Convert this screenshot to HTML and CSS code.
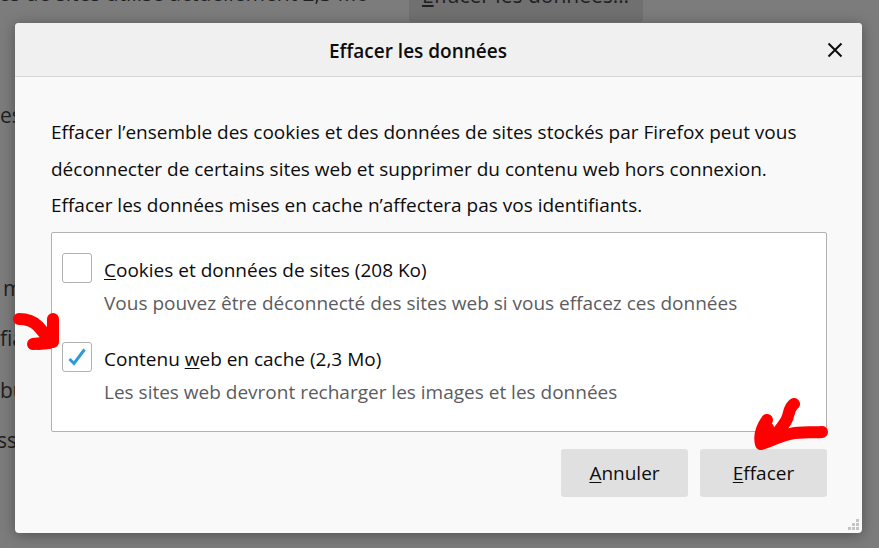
FILE: index.html
```html
<!DOCTYPE html>
<html lang="fr">
<head>
    <meta charset="UTF-8">
    <meta name="viewport" content="width=device-width, initial-scale=1.0">
    <title>Effacer les données</title>
    <link rel="stylesheet" href="styles.css">
</head>
<body>
    <div class="page">
        <div class="top-row">
            <div class="usage"><span>es de sites utilise actuellement 2,3 Mo</span></div>
            <div class="page-btn"><u>E</u>ffacer les données…</div>
        </div>
        <div class="frag frag-1"><span>es</span></div>
        <div class="frag frag-2"><span>m</span></div>
        <div class="frag frag-3"><span>fia</span></div>
        <div class="frag frag-4"><span>bu</span></div>
        <div class="frag frag-5"><span>ss</span></div>
    </div>

    <div class="dialog">
        <div class="dialog-header">
            <h1>Effacer les données</h1>
            <svg class="close" width="16" height="16" viewBox="0 0 16 16">
                <path d="M1.5 1.5 L14.5 14.5 M14.5 1.5 L1.5 14.5" stroke="#0c0c0d" stroke-width="2" fill="none"/>
            </svg>
        </div>
        <div class="dialog-body">
            <p class="intro">Effacer l’ensemble des cookies et des données de sites stockés par Firefox peut vous déconnecter de certains sites web et supprimer du contenu web hors connexion. Effacer les données mises en cache n’affectera pas vos identifiants.</p>
            <div class="options">
                <div class="option">
                    <div class="checkbox"></div>
                    <div class="option-text">
                        <div class="option-label"><u>C</u>ookies et données de sites (208 Ko)</div>
                        <div class="option-desc">Vous pouvez être déconnecté des sites web si vous effacez ces données</div>
                    </div>
                </div>
                <div class="option">
                    <div class="checkbox">
                        <svg width="20" height="20" viewBox="0 0 20 20">
                            <path d="M2.5 12 L7 16.5 L17.5 2.5" stroke="#2e9bd6" stroke-width="3" fill="none"/>
                        </svg>
                    </div>
                    <div class="option-text">
                        <div class="option-label">Contenu <u>w</u>eb en cache (2,3 Mo)</div>
                        <div class="option-desc">Les sites web devront recharger les images et les données</div>
                    </div>
                </div>
            </div>
            <div class="buttons">
                <button type="button"><u>A</u>nnuler</button>
                <button type="button"><u>E</u>ffacer</button>
            </div>
        </div>
        <svg class="grip" width="12" height="12" viewBox="0 0 12 12">
            <path d="M8 0h3v3H8z M4 4h3v3H4z M8 4h3v3H8z M0 8h3v3H0z M4 8h3v3H4z M8 8h3v3H8z" fill="#c4c4c4"/>
        </svg>
    </div>

    <!-- red arrows drawn over the screenshot -->
    <svg class="scribbles" width="879" height="548" viewBox="0 0 879 548">
        <g stroke="#ff0000" stroke-width="12" stroke-linecap="round" stroke-linejoin="round" fill="none">
            <path d="M19 319 C28 319 33 321 38 326 L50 340"/>
            <path d="M53 319 L53 342 L33 344"/>
            <path d="M46 333 L49 343 L38 344"/>
            <path d="M794 404 C788 408 790 414 786 421 C781 429 776 435 770 440"/>
            <path d="M767 420 C762 427 759 436 761 444 C770 441 778 437 790 434 C802 431 812 433 822 432"/>
            <path d="M768 428 L765 441"/>
        </g>
    </svg>
</body>
</html>
```

FILE: styles.css
```css
html, body {
    height: 100%;
}
body {
    margin: 0;
    overflow: hidden;
    background-color: #7c7c7c;
    font-family: "Open Sans", "Noto Sans", sans-serif;
    font-size: 19px;
    color: #0c0c0d;
}
u {
    text-underline-offset: 2px;
}
.page {
    height: 548px;
    font-size: 21px;
    color: #1f1f1f;
}
.top-row {
    display: flex;
    height: 22px;
}
.usage {
    display: flex;
    justify-content: flex-end;
    width: 369px;
    margin-top: -21px;
    white-space: nowrap;
}
.page-btn {
    width: 234px;
    height: 43px;
    margin-top: -21px;
    margin-left: 40px;
    padding-top: 2px;
    padding-left: 13px;
    box-sizing: border-box;
    background-color: #707070;
    border-radius: 3px;
    white-space: nowrap;
}
.frag {
    height: 28px;
    white-space: nowrap;
}
.frag-1 { margin-top: 79px; }
.frag-2 { margin-top: 145px; margin-left: 3px; }
.frag-3 { margin-top: 22px; }
.frag-4 { margin-top: 24px; }
.frag-5 { margin-top: 22px; margin-left: -3px; }

.dialog {
    position: absolute;
    left: 15px;
    top: 23px;
    width: 847px;
    height: 510px;
    background-color: #f9f9f9;
    border-radius: 4px;
    box-shadow: 0 2px 14px rgba(0, 0, 0, 0.35);
    overflow: hidden;
}
.dialog-header {
    display: flex;
    justify-content: center;
    align-items: center;
    position: relative;
    height: 53px;
    padding-right: 41px;
    background-color: #f0f0f0;
    border-bottom: 1px solid #d7d7db;
}
.dialog-header h1 {
    margin: 2px 0 0;
    font-size: 19px;
    font-weight: 600;
}
.close {
    position: absolute;
    right: 19px;
    top: 19px;
}
.dialog-body {
    padding: 37px 35px 0 36px;
}
.intro {
    margin: 0 0 8px;
    line-height: 36.5px;
}
.options {
    box-sizing: border-box;
    height: 200px;
    padding-top: 20px;
    background-color: #fff;
    border: 1px solid #b1b1b3;
    border-radius: 2px;
}
.option {
    display: flex;
    height: 89px;
    padding-left: 10px;
}
.checkbox {
    display: flex;
    justify-content: center;
    align-items: center;
    box-sizing: border-box;
    width: 30px;
    height: 30px;
    background-color: #fff;
    border: 1px solid #b1b1b3;
    border-radius: 3px;
}
.option-text {
    margin-left: 12px;
    padding-top: 1px;
}
.option-label {
    line-height: 33px;
}
.option-desc {
    line-height: 33px;
    color: #5c5c5f;
}
.buttons {
    display: flex;
    justify-content: flex-end;
    gap: 12px;
    margin-top: 17px;
}
button {
    width: 127px;
    height: 48px;
    padding: 0;
    background-color: #e0e0e1;
    border: none;
    border-radius: 3px;
    font-family: inherit;
    font-size: 19px;
    color: #0c0c0d;
}
.grip {
    position: absolute;
    right: 2px;
    bottom: 2px;
}
.scribbles {
    position: absolute;
    left: 0;
    top: 0;
}
```
